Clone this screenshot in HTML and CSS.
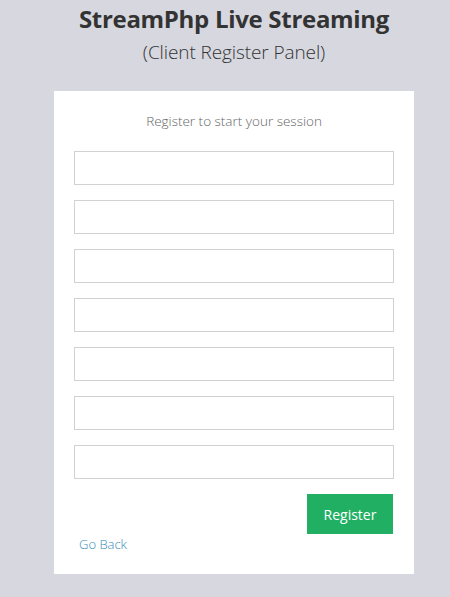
FILE: index.html
```html
<!DOCTYPE html>
<html>
<head>
<meta charset="utf-8">
<link rel="stylesheet" href="styles.css">
</head>
<body>
<div class="page">
  <div class="login-box">
    <div class="logo">
      <div class="logo-title">StreamPhp Live Streaming</div>
      <div class="logo-sub">(Client Register Panel)</div>
    </div>
    <div class="box-body">
      <p class="box-msg">Register to start your session</p>
      <form class="form">
        <input class="field" type="text">
        <input class="field" type="text">
        <input class="field" type="text">
        <input class="field" type="text">
        <input class="field" type="text">
        <input class="field" type="text">
        <input class="field" type="text">
        <div class="actions">
          <button type="button" class="btn">Register</button>
        </div>
      </form>
      <a class="back" href="#">Go Back</a>
    </div>
  </div>
</div>
</body>
</html>
```

FILE: styles.css
```css
html, body {
  margin: 0;
  padding: 0;
  background: #d6d7df;
  font-family: "Open Sans", "Liberation Sans", sans-serif;
}
.page {
  padding-left: 54px;
}
.login-box {
  width: 360px;
}
.logo {
  text-align: center;
  color: #333;
  padding-top: 4px;
  height: 91px;
  box-sizing: border-box;
}
.logo-title {
  font-size: 24px;
  font-weight: 700;
  line-height: 30px;
  letter-spacing: -0.3px;
}
.logo-sub {
  font-size: 19px;
  font-weight: 300;
  line-height: 24px;
  margin-top: 6px;
  letter-spacing: -0.1px;
}
.box-body {
  background: #fff;
  padding: 20px 20px 22px;
  height: 483px;
  box-sizing: border-box;
}
.box-msg {
  margin: 0;
  text-align: center;
  font-size: 13.5px;
  font-weight: 300;
  color: #666;
  line-height: 20px;
  height: 40px;
}
.form {
  display: flex;
  flex-direction: column;
  gap: 15px;
}
.field {
  display: block;
  box-sizing: border-box;
  width: 320px;
  height: 34px;
  margin: 0;
  border: 1px solid #d0d2d6;
  background: #fff;
  padding: 6px 12px;
}
.actions {
  display: flex;
  justify-content: flex-end;
}
.btn {
  width: 86px;
  height: 40px;
  border: none;
  background: #21b063;
  color: #fff;
  font-family: inherit;
  font-size: 14px;
  padding: 0;
  margin-right: 1px;
}
.back {
  display: block;
  width: fit-content;
  margin-top: 0;
  margin-left: 5px;
  color: #3c8dbc;
  font-size: 13px;
  font-weight: 300;
  text-decoration: none;
  line-height: 20px;
}
```
